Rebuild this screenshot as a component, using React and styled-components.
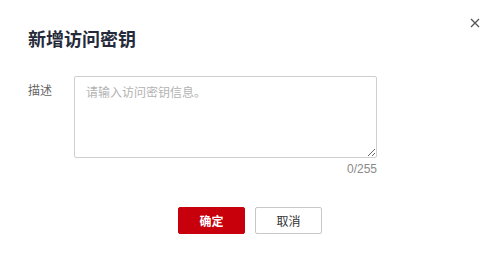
import React from "react";
import styled, { createGlobalStyle } from "styled-components";

const Global = createGlobalStyle`
  html, body { margin: 0; padding: 0; background: #fff; }
  body { font-family: "Noto Sans CJK SC", "Noto Sans", sans-serif; }
  * { box-sizing: border-box; }
`;

const Dialog = styled.div`
  position: relative;
  width: 500px;
  height: 263px;
  padding: 26px 0 0 28px;
  background: #fff;
`;

const Title = styled.h2`
  margin: 0;
  font-size: 18px;
  line-height: 24px;
  font-weight: 700;
  color: #252b3a;
`;

const Close = styled.button`
  position: absolute;
  top: 17px;
  right: 19px;
  width: 12px;
  height: 12px;
  padding: 0;
  border: none;
  background: transparent;
  display: flex;
  align-items: center;
  justify-content: center;
`;

const Form = styled.div`
  margin-top: 26px;
  display: flex;
  flex-direction: column;
`;

const Row = styled.div`
  display: flex;
  align-items: flex-start;
`;

const Label = styled.label`
  width: 46px;
  padding-top: 6px;
  font-size: 12px;
  line-height: 16px;
  color: #666;
`;

const Field = styled.div`
  display: flex;
  flex-direction: column;
  align-items: flex-end;
  width: 303px;
`;

const TextArea = styled.textarea`
  width: 303px;
  height: 82px;
  padding: 6px 11px;
  border: 1px solid #cfcfcf;
  border-radius: 2px;
  font-family: "Noto Sans CJK SC", "Noto Sans", sans-serif;
  font-size: 12px;
  line-height: 18px;
  color: #333;
  outline: none;
  &::placeholder { color: #b3b3b3; }
`;

const Counter = styled.div`
  margin-top: 3px;
  font-family: "Liberation Sans", Arial, sans-serif;
  font-size: 12px;
  line-height: 16px;
  color: #8a8a8a;
`;

const Footer = styled.div`
  display: flex;
  justify-content: center;
  gap: 10px;
  margin-top: 30px;
  margin-left: -28px;
`;

const Button = styled.button`
  width: 67px;
  height: 27px;
  border-radius: 2px;
  font-family: "Noto Sans CJK SC", "Noto Sans", sans-serif;
  font-size: 12px;
  padding: 0;
  border: 1px solid ${p => (p.$primary ? "#c7000b" : "#c8c8c8")};
  background: ${p => (p.$primary ? "#c7000b" : "#fff")};
  color: ${p => (p.$primary ? "#fff" : "#333")};
  font-weight: ${p => (p.$primary ? 700 : 400)};
`;

export default function App() {
  return (
    <>
      <Global />
      <Dialog>
        <Title>新增访问密钥</Title>
        <Close aria-label="关闭">
          <svg width="10" height="10" viewBox="0 0 10 10">
            <path d="M1 1L9 9M9 1L1 9" stroke="#555" strokeWidth="1.3" />
          </svg>
        </Close>
        <Form>
          <Row>
            <Label>描述</Label>
            <Field>
              <TextArea placeholder="请输入访问密钥信息。" />
              <Counter>0/255</Counter>
            </Field>
          </Row>
          <Footer>
            <Button $primary>确定</Button>
            <Button>取消</Button>
          </Footer>
        </Form>
      </Dialog>
    </>
  );
}
